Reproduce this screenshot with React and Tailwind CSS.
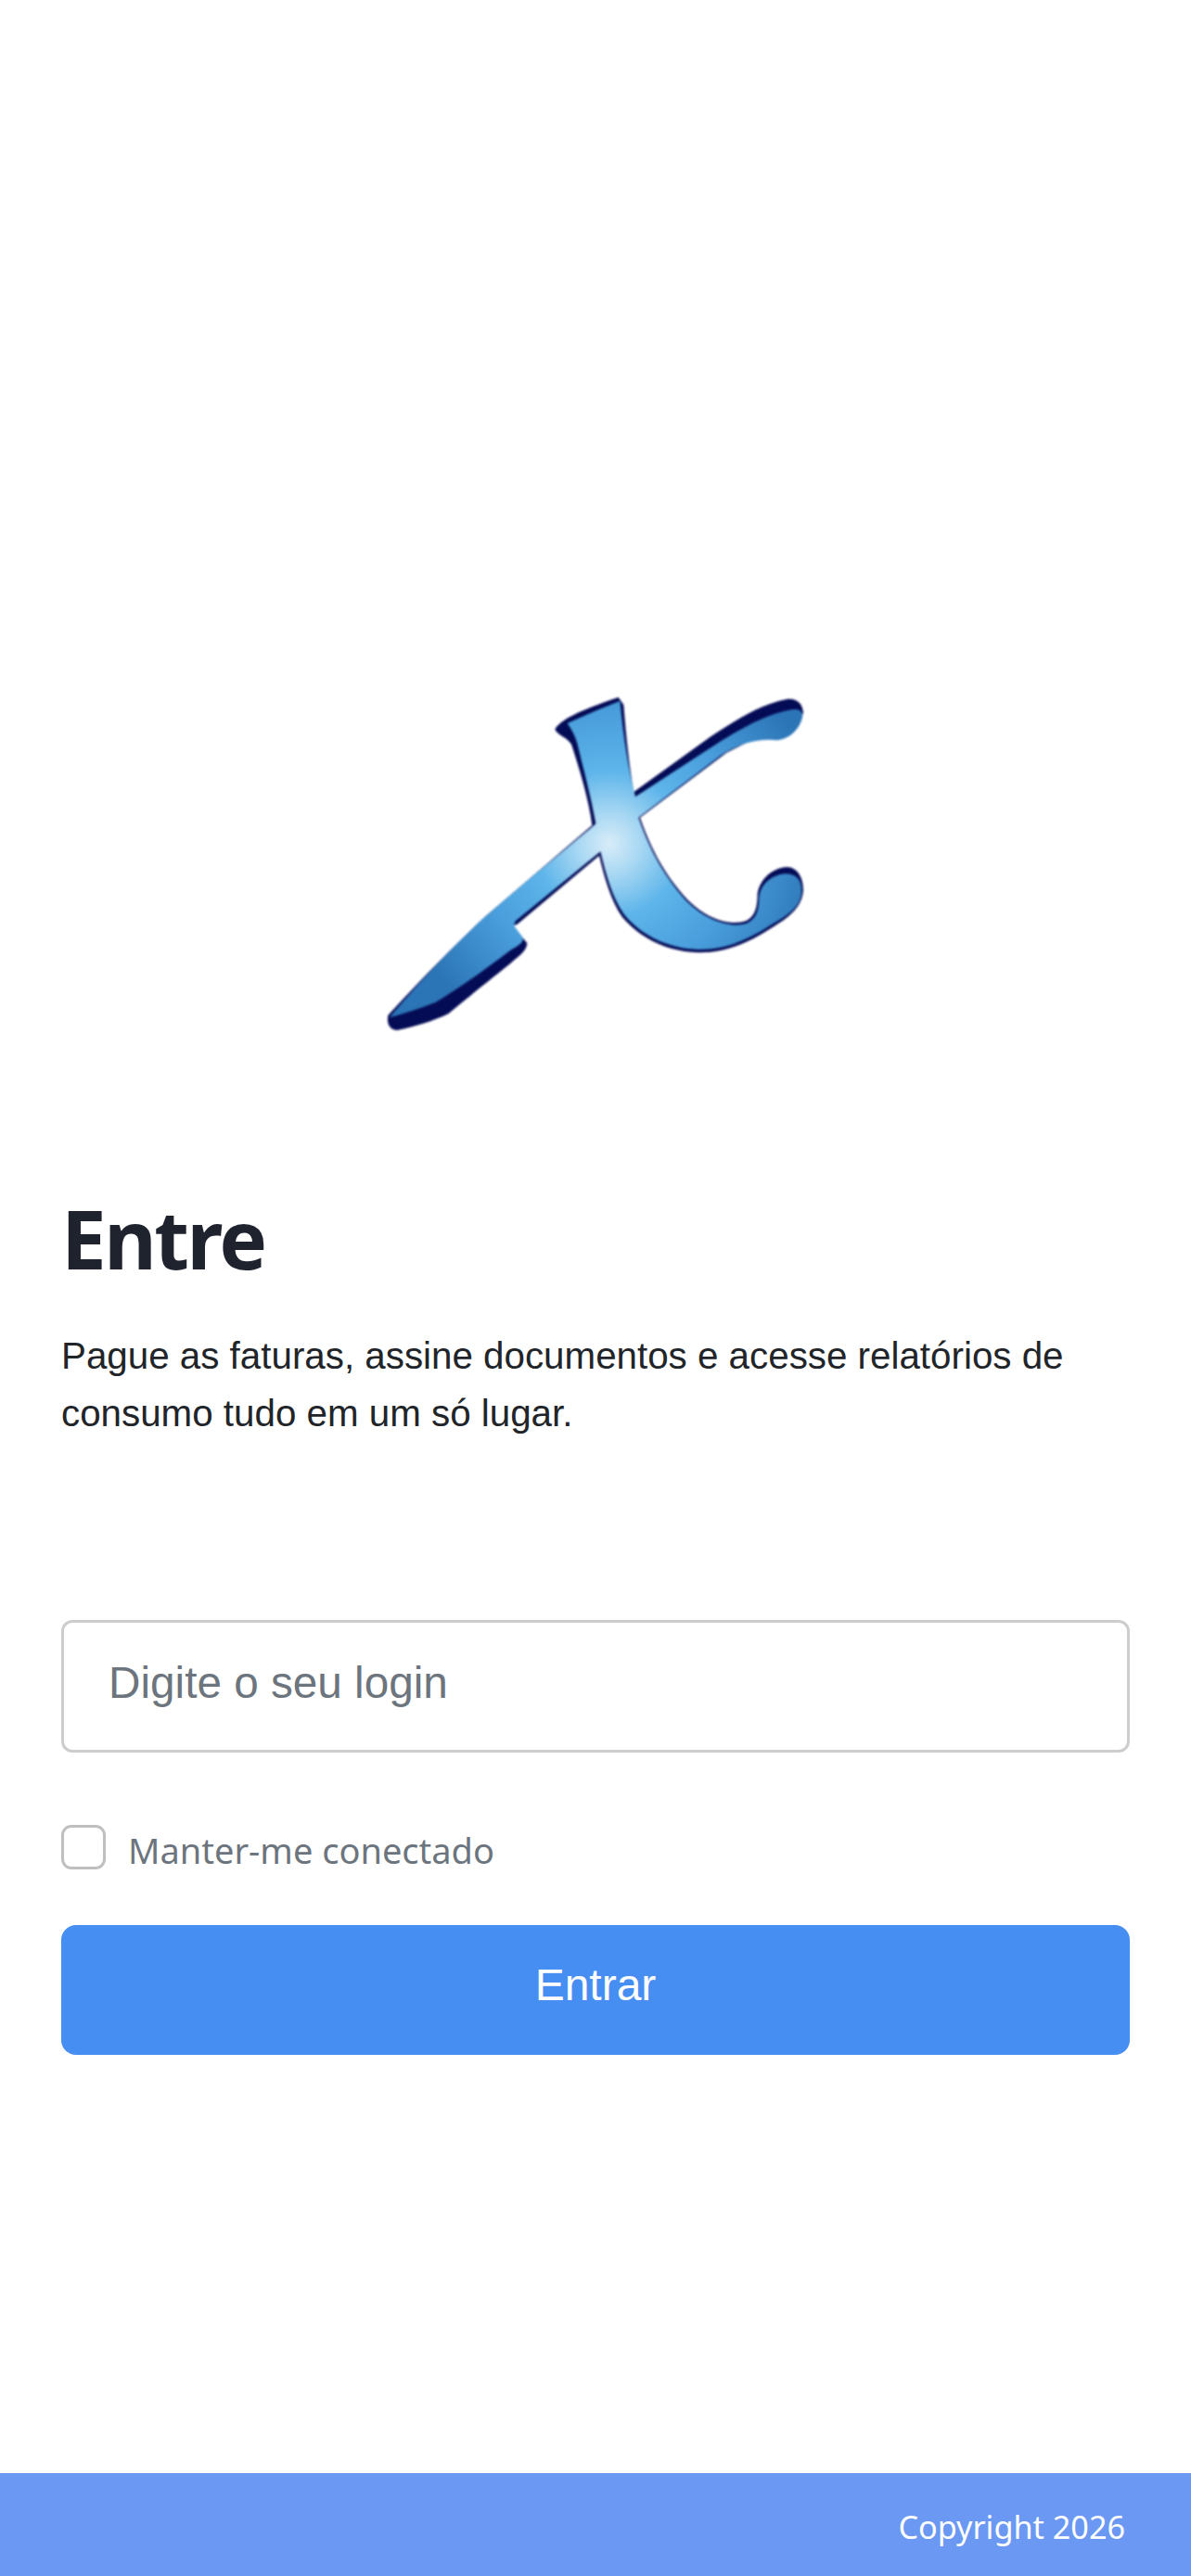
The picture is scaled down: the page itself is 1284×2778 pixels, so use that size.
import React from "react";

function Logo() {
  const body = "M665 150 L760 108 L835 78 C845 180 860 290 885 388 L1130 228 C1220 170 1310 118 1395 105 C1418 103 1428 112 1425 132 C1415 170 1385 200 1345 205 C1290 198 1225 212 1160 255 L895 455 C925 540 965 630 1050 725 C1110 785 1190 815 1245 797 C1275 785 1285 755 1285 715 C1290 670 1325 640 1370 637 C1410 637 1425 660 1422 700 C1418 745 1380 770 1320 805 C1250 850 1180 882 1090 882 C980 878 900 830 850 770 C810 715 790 640 772 565 L497 790 L492 805 L522 845 C520 865 500 872 480 885 C400 945 320 1005 240 1052 C190 1072 140 1088 90 1102 C150 1030 250 915 400 775 C510 680 620 590 740 490 L757 475 C740 380 715 290 697 215 C690 190 680 172 665 150 Z";
  const dark = "M625 170 C640 140 700 110 830 66 L847 90 C855 190 865 290 880 372 L1130 192 C1220 132 1300 85 1375 72 C1410 68 1428 90 1428 120 L1180 245 L900 455 C930 540 970 630 1055 722 C1115 782 1190 808 1245 788 C1270 775 1280 750 1280 700 C1290 650 1330 618 1375 615 C1410 616 1428 650 1428 690 C1425 745 1380 780 1325 812 C1255 858 1180 892 1090 892 C975 888 895 838 843 778 C805 722 785 650 768 578 L503 800 L490 805 L535 862 C532 890 510 900 480 928 C400 992 340 1040 280 1090 C230 1114 170 1132 115 1143 C90 1142 80 1122 85 1095 C150 1025 250 915 400 775 L745 480 C735 400 705 300 678 218 C665 195 635 190 625 170 Z";
  return (
    <svg viewBox="0 0 1500 1200" className="block w-[500px] h-[400px]" style={{ filter: "blur(0.8px)" }}>
      <defs>
        <radialGradient id="xg" gradientUnits="userSpaceOnUse" cx="800" cy="540" r="700">
          <stop offset="0" stopColor="#d8edf9" />
          <stop offset="0.14" stopColor="#a9d8f3" />
          <stop offset="0.34" stopColor="#5db5ea" />
          <stop offset="0.6" stopColor="#4a9fdc" />
          <stop offset="1" stopColor="#2b74b6" />
        </radialGradient>
      </defs>
      <path d={dark} fill="#050c56" />
      <path d={body} fill="url(#xg)" />
    </svg>
  );
}

export default function App() {
  return (
    <div className="flex h-[2778px] w-[1284px] flex-col bg-white">
      <main className="flex flex-col px-[66px]">
        <div className="ml-[324px] mt-[730px]"><Logo /></div>
        <h1 className="mt-[150px] text-[87px] leading-[110px] font-bold text-[#1f232e] tracking-[-2.5px] [font-family:'Noto_Sans',sans-serif]">Entre</h1>
        <p className="mt-[41px] text-[40.33px] leading-[62px] text-[#212529] [font-family:'Liberation_Sans',sans-serif]">
          Pague as faturas, assine documentos e acesse relatórios de consumo tudo em um só lugar.
        </p>
        <input
          placeholder="Digite o seu login"
          className="mt-[192px] h-[143px] w-full rounded-[12px] border-[3px] border-[#cdcdcd] bg-white px-[48px] pb-[8px] text-[47.7px] text-[#212529] outline-none placeholder:text-[#6c757d] [font-family:'Liberation_Sans',sans-serif]"
        />
        <label className="mt-[78px] flex items-start gap-[24px]">
          <span className="h-[48px] w-[48px] shrink-0 rounded-[11px] border-[3px] border-[#bfbfbf] bg-white" />
          <span className="text-[38px] leading-[54px] text-[#6c757d] [font-family:'Noto_Sans',sans-serif]">Manter-me conectado</span>
        </label>
        <button className="mt-[54px] h-[140px] w-full rounded-[16px] bg-[#468ef2] pb-[10px] text-center text-[48px] text-white [font-family:'Liberation_Sans',sans-serif]">
          Entrar
        </button>
      </main>
      <footer className="mt-auto flex h-[111px] items-center justify-end bg-[#6a98f2] pr-[71px] pt-[4px] text-[34.2px] text-white [font-family:'Noto_Sans',sans-serif]">
        Copyright 2026
      </footer>
    </div>
  );
}
